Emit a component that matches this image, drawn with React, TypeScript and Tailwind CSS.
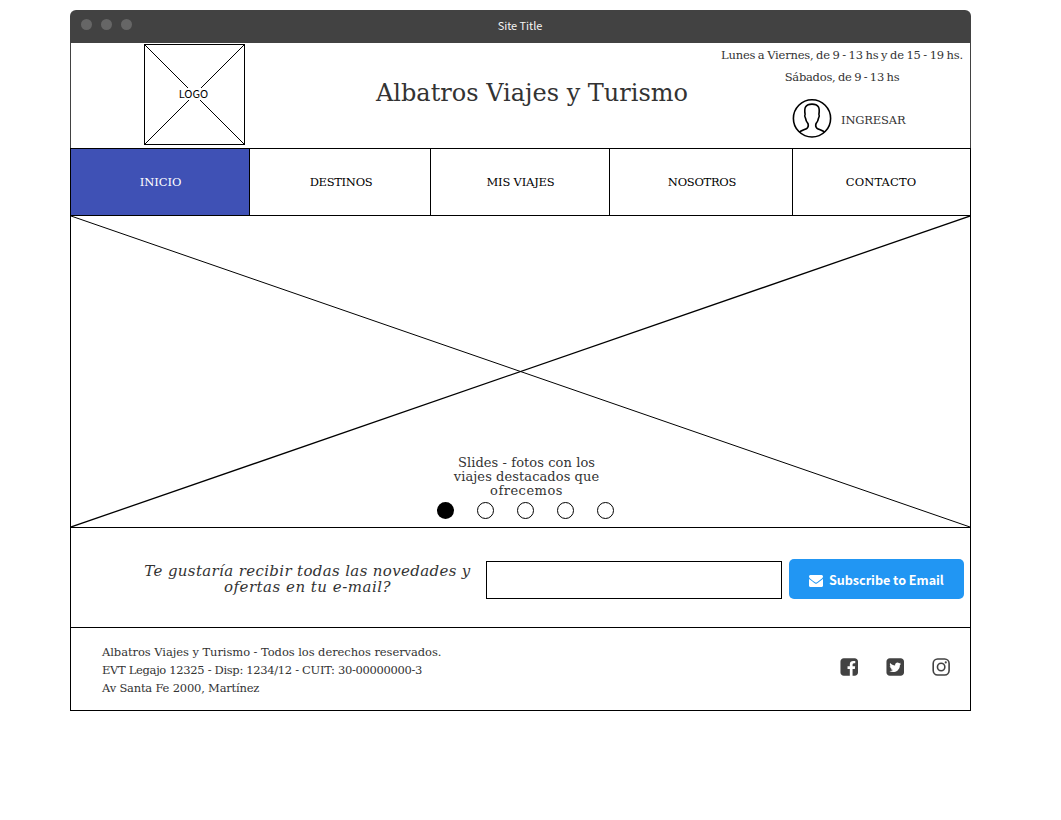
import type { ReactNode } from "react";

const serif = "font-['DejaVu_Serif',serif]";
const sans = "font-['Noto_Sans_CJK_SC',sans-serif]";

function WindowBar() {
  return (
    <div className="grid h-[33px] grid-cols-[1fr_auto_1fr] rounded-t-[6px] bg-[#424242]">
      <div className="flex gap-[9px] pl-[11px] pt-[9px]">
        {[0, 1, 2].map((i) => (
          <span key={i} className="h-[11px] w-[11px] rounded-full bg-[#666]" />
        ))}
      </div>
      <span className={`${sans} h-[30px] pr-px text-[11px] leading-[31px] tracking-[-0.05px] text-[#f5f5f5]`}>Site Title</span>
      <div />
    </div>
  );
}

function Logo() {
  return (
    <div className="ml-[73px] mt-px grid h-[101px] w-[101px] place-items-center border border-black">
      <svg className="col-start-1 row-start-1" width="99" height="99" viewBox="0 0 99 99" stroke="#000" strokeWidth="1">
        <path d="M0 0L99 99M99 0L0 99" shapeRendering="crispEdges" />
      </svg>
      <span className={`${sans} col-start-1 row-start-1 mb-px mr-[2px] h-[12px] bg-white text-[11px] leading-[11px] text-black`}>LOGO</span>
    </div>
  );
}

function UserIcon() {
  return (
    <svg width="40" height="42" viewBox="0 0 40 42" fill="none" stroke="#000" strokeWidth="1.6" strokeLinejoin="round">
      <circle cx="20" cy="20.4" r="18.6" />
      <path d="M7.400 34.200C9.400 32.400 13.200 31.600 15 30.300C16.600 29.100 16.600 27.600 16 25.600C14.600 24 13.700 22.200 13.500 20.200C12.600 18.800 12.500 17.400 13.100 16.400C12.600 13.400 12.400 10.800 13.700 8.700C14.900 6.900 17.300 6.100 20 6.100C22.700 6.100 25.100 6.900 26.300 8.700C27.600 10.800 27.400 13.400 26.900 16.400C27.500 17.400 27.400 18.800 26.500 20.200C26.300 22.200 25.400 24 24 25.600C23.400 27.600 23.400 29.100 25 30.300C26.800 31.600 30.600 32.400 32.600 34.200" />
    </svg>
  );
}

function Header() {
  return (
    <header className={`${serif} flex h-[105px] border-x border-[#424242] text-[11.5px] text-[#333]`}>
      <Logo />
      <h1 className="ml-[131px] mt-[35px] w-[338px] whitespace-nowrap text-[24px] leading-[30px]">
        Albatros Viajes y Turismo
      </h1>
      <div className="w-[256px] whitespace-nowrap">
        <p className="pt-px text-center leading-[22px] tracking-[-0.2px] [word-spacing:-0.8px]">
          Lunes a Viernes, de 9 - 13 hs y de 15 - 19 hs.
        </p>
        <p className="text-center leading-[22px] tracking-[-0.25px] [word-spacing:-0.9px]">Sábados, de 9 - 13 hs</p>
        <div className="flex items-center gap-[9px] pl-[78px] pt-[10px]">
          <UserIcon />
          <span className="pt-[4px] tracking-[-0.15px]">INGRESAR</span>
        </div>
      </div>
    </header>
  );
}

function NavItem({ className, children }: { className: string; children: ReactNode }) {
  return <a className={`flex items-center justify-center whitespace-nowrap pt-px ${className}`}>{children}</a>;
}

function Nav() {
  return (
    <nav className={`${serif} flex h-[68px] border-y border-black text-[11.5px] text-black`}>
      <NavItem className="w-[179px] border-r border-black bg-[#3f51b5] pl-px tracking-[-0.05px] text-white">INICIO</NavItem>
      <NavItem className="w-[181px] border-r border-black pl-[2px] tracking-[-0.3px]">DESTINOS</NavItem>
      <NavItem className="w-[179px] border-r border-black pl-px tracking-[-0.2px]">MIS VIAJES</NavItem>
      <NavItem className="w-[183px] border-r border-black pl-[2px] tracking-[-0.27px]">NOSOTROS</NavItem>
      <NavItem className="w-[177px] pr-px tracking-[0.13px]">CONTACTO</NavItem>
    </nav>
  );
}

function Slides() {
  return (
    <section className="grid h-[312px] border-b border-black">
      <svg className="col-start-1 row-start-1" width="899" height="311" viewBox="0 0 899 311" stroke="#000">
        <path d="M0 0L899 311" strokeWidth="1" />
        <path d="M899 0L0 311" strokeWidth="1.3" />
      </svg>
      <div className="col-start-1 row-start-1 flex flex-col pt-[240px]">
        <div className={`${serif} ml-[355px] w-[201px] text-center text-[13px] leading-[14px] text-[#333]`}>
          <p className="tracking-[0.08px]">Slides - fotos con los</p>
          <p className="tracking-[0.08px]">viajes destacados que</p>
          <p className="tracking-[0.5px]">ofrecemos</p>
        </div>
        <div className="ml-[366px] mt-[4px] flex gap-[23px]">
          <span className="h-[17px] w-[17px] rounded-full bg-black" />
          {[1, 2, 3, 4].map((i) => (
            <span key={i} className="h-[17px] w-[17px] rounded-full border border-black bg-white" />
          ))}
        </div>
      </div>
    </section>
  );
}

function Newsletter() {
  return (
    <section className="flex h-[100px] border-b border-black">
      <div className={`${serif} ml-[66px] mt-[35px] w-[341px] whitespace-nowrap text-center text-[15px] italic leading-4 text-[#333]`}>
        <p className="tracking-[0.35px]">Te gustaría recibir todas las novedades y</p>
        <p className="tracking-[0.5px]">ofertas en tu e-mail?</p>
      </div>
      <input aria-label="E-mail" className="ml-[8px] mt-[33px] h-[38px] w-[296px] border border-black bg-white px-2 outline-none" />
      <button className={`${sans} ml-[7px] mt-[31px] flex h-[40px] w-[175px] items-center whitespace-nowrap rounded-[5px] bg-[#2196f3] pl-[20px] text-[12.6px] font-bold text-white`}>
        <svg className="mr-[6px] mt-[4px]" width="14" height="12" viewBox="0 256 1792 1408" preserveAspectRatio="none" fill="currentColor">
          <path d="M1792 710v794q0 66-47 113t-113 47h-1472q-66 0-113-47t-47-113v-794q44 49 101 87 362 246 497 345 57 42 92.500 65.500t94.500 48 110 24.500h2q51 0 110-24.500t94.500-48 92.500-65.500q170-123 498-345 57-39 100-87zm0-294q0 79-49 151t-122 123q-376 261-468 325-10 7-42.500 31t-54 38.500-52 32.500-57.500 27-50 9h-2q-23 0-50-9t-57.500-27-52-32.500-54-38.500-42.500-31q-91-64-262-182.500t-205-142.500q-62-42-117-115.500t-55-136.500q0-78 41.500-130t118.500-52h1472q65 0 112.500 47t47.500 113z" />
        </svg>
        <span className="pt-[2px] tracking-[-0.03px]">Subscribe to Email</span>
      </button>
    </section>
  );
}

const facebook =
  "M1376 128q119 0 203.500 84.500t84.500 203.500v960q0 119-84.500 203.500t-203.500 84.500h-188v-595h199l30-232h-229v-148q0-56 23.500-84t91.500-28l122-1v-207q-63-9-178-9-136 0-217.500 80t-81.500 226v171h-200v232h200v595h-532q-119 0-203.500-84.500t-84.500-203.500v-960q0-119 84.500-203.500t203.500-84.500h960z";
const twitter =
  "M1408 610q-56 25-121 34 68-40 93-117-65 38-134 51-61-66-153-66-87 0-148.500 61.500t-61.500 148.500q0 29 5 48-129-7-242-65t-192-155q-29 50-29 106 0 114 91 175-47-1-100-26v2q0 75 50 133.500t123 72.500q-29 8-51 8-13 0-39-4 21 63 74.500 104t121.500 42q-116 90-261 90-26 0-50-3 148 94 322 94 112 0 210-35.500t168-95 120.500-137 75-162 24.500-168.500q0-18-1-27 63-45 105-109zm256-194v960q0 119-84.500 203.500t-203.500 84.500h-960q-119 0-203.500-84.500t-84.500-203.500v-960q0-119 84.500-203.500t203.500-84.500h960q119 0 203.500 84.500t84.500 203.500z";

function Footer() {
  return (
    <footer className="flex h-[83px] justify-between border-b border-black">
      <div className={`${serif} ml-[31px] mt-[15px] whitespace-nowrap text-[11.5px] leading-[18px] text-[#333]`}>
        <p className="tracking-[-0.06px]">Albatros Viajes y Turismo - Todos los derechos reservados.</p>
        <p className="tracking-[-0.32px]">EVT Legajo 12325 - Disp: 1234/12 - CUIT: 30-00000000-3</p>
        <p className="tracking-[-0.2px]">Av Santa Fe 2000, Martínez</p>
      </div>
      <div className="mr-[20px] mt-[30px] flex gap-[28px] text-[#424242]">
        <svg width="18" height="18" viewBox="88 108 1576 1576" fill="currentColor"><path d={facebook} /></svg>
        <svg width="18" height="18" viewBox="88 108 1576 1576" fill="currentColor"><path d={twitter} /></svg>
        <svg width="18" height="18" viewBox="0 0 18 18" fill="none" stroke="currentColor" strokeWidth="1.6">
          <rect x="1.200" y="1.050" width="15.900" height="15.900" rx="4.400" />
          <circle cx="9.150" cy="9" r="3.700" />
          <circle cx="13.750" cy="4.400" r="1.050" fill="currentColor" stroke="none" />
        </svg>
      </div>
    </footer>
  );
}

export default function App() {
  return (
    <div className="h-[820px] bg-white pl-[70px] pt-[10px]">
      <div className="w-[901px]">
        <WindowBar />
        <Header />
        <div className="border-x border-black">
          <Nav />
          <Slides />
          <Newsletter />
          <Footer />
        </div>
      </div>
    </div>
  );
}
